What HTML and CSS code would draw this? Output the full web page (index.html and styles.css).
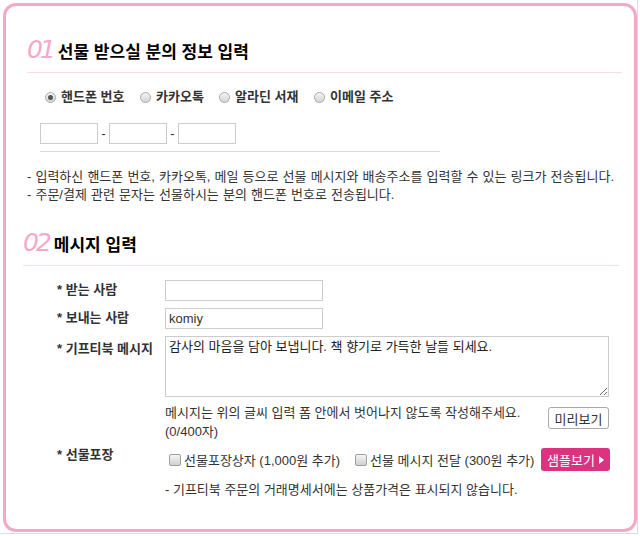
FILE: index.html
```html
<!DOCTYPE html>
<html lang="ko">
<head>
    <meta charset="UTF-8">
    <title>기프티북 선물하기</title>
    <link rel="stylesheet" href="styles.css">
</head>
<body>
    <div class="page">
        <div class="frame">
            <!-- 01 receiver -->
            <section class="block block-first">
                <h2 class="block-title"><span class="num">01</span>선물 받으실 분의 정보 입력</h2>

                <div class="recipient">
                    <div class="radios">
                        <label class="radio radio-wide checked"><span class="dot"></span>핸드폰 번호</label>
                        <label class="radio"><span class="dot"></span>카카오톡</label>
                        <label class="radio radio-wide"><span class="dot"></span>알라딘 서재</label>
                        <label class="radio"><span class="dot"></span>이메일 주소</label>
                    </div>
                    <div class="phone">
                        <input type="text" class="phone-input" maxlength="4">
                        <span class="dash">-</span>
                        <input type="text" class="phone-input" maxlength="4">
                        <span class="dash">-</span>
                        <input type="text" class="phone-input" maxlength="4">
                    </div>
                </div>

                <ul class="notes">
                    <li>- 입력하신 핸드폰 번호, 카카오톡, 메일 등으로 선물 메시지와 배송주소를 입력할 수 있는 링크가 전송됩니다.</li>
                    <li>- 주문/결제 관련 문자는 선물하시는 분의 핸드폰 번호로 전송됩니다.</li>
                </ul>
            </section>

            <!-- 02 message -->
            <section class="block block-second">
                <h2 class="block-title"><span class="num">02</span>메시지 입력</h2>

                <div class="form">
                    <div class="row">
                        <span class="label">* 받는 사람</span>
                        <input type="text" class="field">
                    </div>
                    <div class="row">
                        <span class="label">* 보내는 사람</span>
                        <input type="text" class="field" value="komiy">
                    </div>
                    <div class="row">
                        <span class="label label-message">* 기프티북 메시지</span>
                        <textarea class="message">감사의 마음을 담아 보냅니다. 책 향기로 가득한 날들 되세요.</textarea>
                    </div>
                    <div class="row help-row">
                        <span class="label"></span>
                        <div class="help">
                            <p>메시지는 위의 글씨 입력 폼 안에서 벗어나지 않도록 작성해주세요.<br>(0/400자)</p>
                            <button type="button" class="btn-preview">미리보기</button>
                        </div>
                    </div>
                    <div class="row wrap-row">
                        <span class="label label-wrap">* 선물포장</span>
                        <div class="wrap-options">
                            <label class="check check-box"><span class="box"></span>선물포장상자 (1,000원 추가)</label>
                            <label class="check"><span class="box"></span>선물 메시지 전달 (300원 추가)</label>
                            <button type="button" class="btn-sample">샘플보기 <span class="arrow"></span></button>
                        </div>
                    </div>
                    <div class="row">
                        <span class="label"></span>
                        <p class="wrap-note">- 기프티북 주문의 거래명세서에는 상품가격은 표시되지 않습니다.</p>
                    </div>
                </div>
            </section>
        </div>
    </div>
</body>
</html>
```

FILE: styles.css
```css
body {
    margin: 0;
    background: #fff;
    font-family: "Liberation Sans", "Noto Sans CJK KR", sans-serif;
    font-size: 13px;
    color: #333;
}

.page {
    width: 638px;
    height: 534px;
    box-sizing: border-box;
    padding: 3px 0 0 3px;
    border-right: 1px solid #dcdcdc;
    border-bottom: 1px solid #dcdcdc;
}

.frame {
    width: 634px;
    height: 529px;
    box-sizing: border-box;
    border: 3px solid #f5a6c9;
    border-radius: 13px;
    padding-top: 30px;
}

.block {
    margin-right: 12px;
}

.block-first {
    margin-left: 21px;
}

.block-second {
    margin-left: 17px;
    margin-right: 15px;
    margin-top: 25px;
}

.block-title {
    display: flex;
    align-items: baseline;
    margin: 0;
    height: 28px;
    padding-bottom: 8px;
    border-bottom: 1px solid #fbdbe8;
    font-family: "Noto Sans CJK KR", sans-serif;
    font-size: 17px;
    font-weight: bold;
    line-height: 28px;
    color: #000;
}

.num {
    font-family: "DejaVu Sans", sans-serif;
    font-style: italic;
    font-weight: normal;
    font-size: 25px;
    letter-spacing: -3px;
    color: #f6a8ca;
    margin-right: 5px;
}

/* radio + phone */
.recipient {
    width: 400px;
    margin-left: 13px;
    padding-bottom: 7px;
    border-bottom: 1px solid #dcdcdc;
}

.radios {
    display: flex;
    height: 16px;
    margin-top: 16px;
    margin-left: 5px;
}

.radio {
    display: flex;
    align-items: center;
    flex: none;
    width: 79px;
    white-space: nowrap;
    font-weight: bold;
    line-height: 16px;
    color: #333;
}

.radio-wide {
    width: 95px;
}

.radio:last-child {
    width: auto;
}

.dot {
    flex: none;
    width: 11px;
    height: 11px;
    border-radius: 50%;
    border: 1px solid #a9a9a9;
    background: linear-gradient(#f4f4f4, #d4d4d4);
    margin-right: 5px;
    box-sizing: border-box;
    position: relative;
}

.radio.checked .dot::after {
    content: "";
    position: absolute;
    left: 2px;
    top: 2px;
    width: 5px;
    height: 5px;
    border-radius: 50%;
    background: #555;
}

.phone {
    display: flex;
    align-items: center;
    margin-top: 18px;
}

.phone-input {
    width: 58px;
    height: 21px;
    box-sizing: border-box;
    border: 1px solid #ccc;
    padding: 0 3px;
    margin: 0;
}

.dash {
    width: 11px;
    text-align: center;
}

.notes {
    list-style: none;
    margin: 16px 0 0;
    padding: 0;
    line-height: 18px;
    word-spacing: 0.5px;
    color: #333;
}

/* message form */
.form {
    padding-left: 34px;
    padding-top: 14px;
}

.row {
    display: flex;
    align-items: flex-start;
    margin-bottom: 7px;
}

.label {
    width: 108px;
    flex: none;
    font-weight: bold;
    line-height: 20px;
    color: #333;
}

.label-message {
    padding-top: 3px;
}

.field {
    width: 158px;
    height: 21px;
    box-sizing: border-box;
    border: 1px solid #ccc;
    padding: 0 3px;
    margin: 0;
    font-family: inherit;
    font-size: 13px;
    color: #333;
}

.message {
    width: 444px;
    height: 61px;
    box-sizing: border-box;
    border: 1px solid #ccc;
    padding: 2px 3px;
    margin: 0;
    font-family: inherit;
    font-size: 13px;
    line-height: 16px;
    color: #222;
}

.help-row {
    margin-top: -1px;
}

.help {
    width: 444px;
    display: flex;
    justify-content: space-between;
    align-items: flex-start;
}

.help p {
    margin: 0;
    line-height: 19px;
}

.btn-preview {
    margin-top: 4px;
    width: 61px;
    height: 22px;
    border: 1px solid #aaa;
    border-radius: 3px;
    background: #fff;
    font-family: inherit;
    font-size: 13px;
    color: #333;
    padding: 0;
}

.label-wrap {
    line-height: 14px;
}

.wrap-options {
    width: 445px;
    display: flex;
    align-items: center;
    height: 23px;
}

.check {
    display: flex;
    align-items: center;
}

.check-box {
    width: 186px;
    margin-left: 4px;
}

.box {
    width: 12px;
    height: 12px;
    box-sizing: border-box;
    border: 1px solid #a0a0a0;
    border-radius: 2px;
    background: linear-gradient(#f4f4f4, #d0d0d0);
    margin-right: 3px;
}

.btn-sample {
    width: 69px;
    height: 23px;
    border: none;
    border-radius: 3px;
    background: #dc3380;
    color: #fff;
    font-family: inherit;
    font-size: 13px;
    padding: 0;
    margin-left: auto;
    display: flex;
    align-items: center;
    justify-content: center;
}

.arrow {
    width: 0;
    height: 0;
    border-left: 5px solid #fff;
    border-top: 4px solid transparent;
    border-bottom: 4px solid transparent;
    margin-left: 4px;
}

.wrap-note {
    margin: 3px 0 0;
    line-height: 18px;
}
```
